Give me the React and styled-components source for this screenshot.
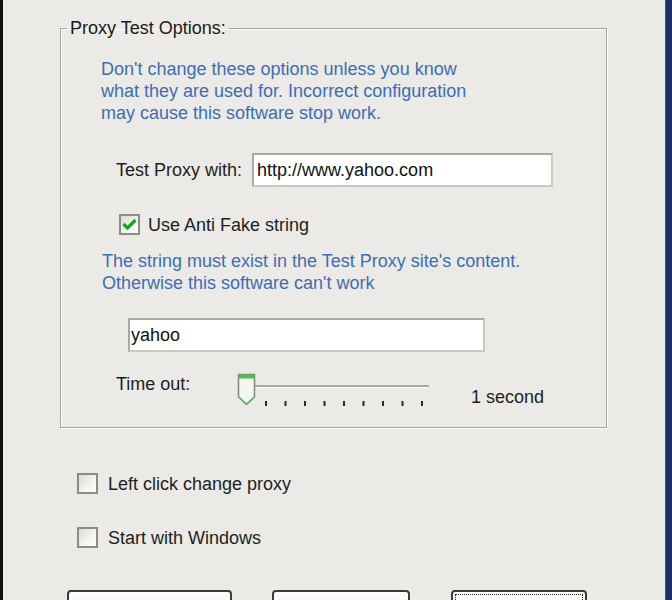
import React from 'react';
import styled, { createGlobalStyle } from 'styled-components';

const GlobalStyle = createGlobalStyle`
  html, body {
    margin: 0;
    padding: 0;
    overflow: hidden;
    background: #ebeae7;
  }
  body {
    font-family: "Liberation Sans", Arial, sans-serif;
    font-size: 18px;
    color: #1e1e1e;
  }
`;

const Window = styled.div`
  height: 600px;
  border-left: 3px solid #111;
  border-right: 6px solid #1c2c66;
  box-shadow: inset -1px 0 0 #555;
  background: #ebeae7;
  display: flex;
  flex-direction: column;
`;

const Group = styled.fieldset`
  box-sizing: border-box;
  width: 547px;
  margin: 17px 0 0 57px;
  padding: 0 0 21px;
  border: 1px solid #a3a39c;
  box-shadow: 1px 1px 0 #fff, inset 1px 1px 0 #fff;
`;

const Legend = styled.legend`
  margin-left: 6px;
  padding: 0 3px;
  line-height: 22px;
  color: #1a1a1a;
`;

const Note = styled.p`
  margin: ${p => p.$top}px 0 0 ${p => p.$left}px;
  line-height: 22px;
  color: #3e6db3;
`;

const FieldRow = styled.div`
  display: flex;
  align-items: center;
  margin-top: ${p => p.$top}px;
  padding-left: ${p => p.$left}px;
  gap: 10px;
`;

const Label = styled.span`
  line-height: 22px;
  white-space: nowrap;
`;

const TextBox = styled.div`
  box-sizing: border-box;
  width: ${p => p.$width}px;
  height: 34px;
  margin-left: ${p => p.$left || 0}px;
  margin-top: ${p => p.$top || 0}px;
  padding: 0 ${p => p.$pad ?? 3}px;
  background: #fff;
  border: 2px solid #a9a9a4;
  border-right-color: #c9c9c4;
  border-bottom-color: #c9c9c4;
  line-height: 30px;
  color: #111;
`;

const Box = styled.span`
  box-sizing: border-box;
  width: 21px;
  height: 21px;
  border: 2px solid #8a8c88;
  background: linear-gradient(135deg, #dcdcd6 0%, #f4f4f0 60%, #fff 100%);
  display: flex;
  align-items: center;
  justify-content: center;
  flex-shrink: 0;
`;

const CheckRow = styled.div`
  display: flex;
  align-items: center;
  gap: ${p => p.$gap}px;
  margin-top: ${p => p.$top}px;
  padding-left: ${p => p.$left}px;
  height: 21px;
`;

const SliderRow = styled.div`
  display: flex;
  margin-top: 21px;
  padding-left: 55px;
  height: 33px;
`;

const SliderLabel = styled.span`
  line-height: 22px;
  width: 121px;
`;

const Value = styled.span`
  margin-left: 39px;
  padding-top: 13px;
  line-height: 22px;
`;

const Buttons = styled.div`
  display: flex;
  margin: 42px 0 0 64px;
`;

const Button = styled.div`
  box-sizing: border-box;
  width: ${p => p.$width}px;
  height: 34px;
  margin-left: ${p => p.$gap || 0}px;
  border: 2px solid #3b3b3b;
  border-radius: 4px;
  background: linear-gradient(#fff, #f3f2ee 70%, #dedcd3);
  padding: 2px;

  &::after {
    content: '';
    display: ${p => (p.$focused ? 'block' : 'none')};
    height: 100%;
    box-sizing: border-box;
    border: 1px dotted #222;
  }
`;

const Check = ({ checked }) => (
  <Box>
    {checked && (
      <svg width="15" height="13" viewBox="0 0 15 13">
        <path d="M1.5 6 L5.5 10 L13.5 2" fill="none" stroke="#21a021" strokeWidth="3.2" />
      </svg>
    )}
  </Box>
);

const Slider = () => {
  const ticks = Array.from({ length: 9 }, (_, i) => 28 + i * 19.5);
  return (
    <svg width="195" height="33" viewBox="0 0 195 33">
      <rect x="10" y="12" width="182" height="2" fill="#a7a7a2" />
      <rect x="10" y="14" width="182" height="1" fill="#fff" />
      {ticks.map(x => (
        <rect key={x} x={x} y="28" width="2" height="5" fill="#2a2a2a" />
      ))}
      <path d="M1.5 1.5 H17.5 V24 L9.5 31.5 L1.5 24 Z" fill="#f5f5f2" stroke="#7d8b7a" strokeWidth="1.5" />
      <rect x="1.5" y="1.5" width="16" height="4" fill="#4dbd4d" />
      <path d="M2.5 24.5 L9.5 31 L16.5 24.5" fill="none" stroke="#5bbd5b" strokeWidth="1.2" />
    </svg>
  );
};

const App = () => (
  <Window>
    <GlobalStyle />
    <Group>
      <Legend>Proxy Test Options:</Legend>
      <Note $top={19} $left={40}>
        Don't change these options unless you know
        <br />
        what they are used for. Incorrect configuration
        <br />
        may cause this software stop work.
      </Note>
      <FieldRow $top={29} $left={55}>
        <Label>Test Proxy with:</Label>
        <TextBox $width={301}>http://www.yahoo.com</TextBox>
      </FieldRow>
      <CheckRow $top={27} $left={58} $gap={8}>
        <Check checked />
        <Label>Use Anti Fake string</Label>
      </CheckRow>
      <Note $top={15} $left={41}>
        The string must exist in the Test Proxy site's content.
        <br />
        Otherwise this software can't work
      </Note>
      <TextBox $width={357} $left={67} $top={24} $pad={1}>
        yahoo
      </TextBox>
      <SliderRow>
        <SliderLabel>Time out:</SliderLabel>
        <Slider />
        <Value>1 second</Value>
      </SliderRow>
    </Group>
    <CheckRow $top={45} $left={74} $gap={10}>
      <Check />
      <Label>Left click change proxy</Label>
    </CheckRow>
    <CheckRow $top={33} $left={74} $gap={10}>
      <Check />
      <Label>Start with Windows</Label>
    </CheckRow>
    <Buttons>
      <Button $width={165} />
      <Button $width={138} $gap={40} />
      <Button $width={136} $gap={41} $focused />
    </Buttons>
  </Window>
);

export default App;
